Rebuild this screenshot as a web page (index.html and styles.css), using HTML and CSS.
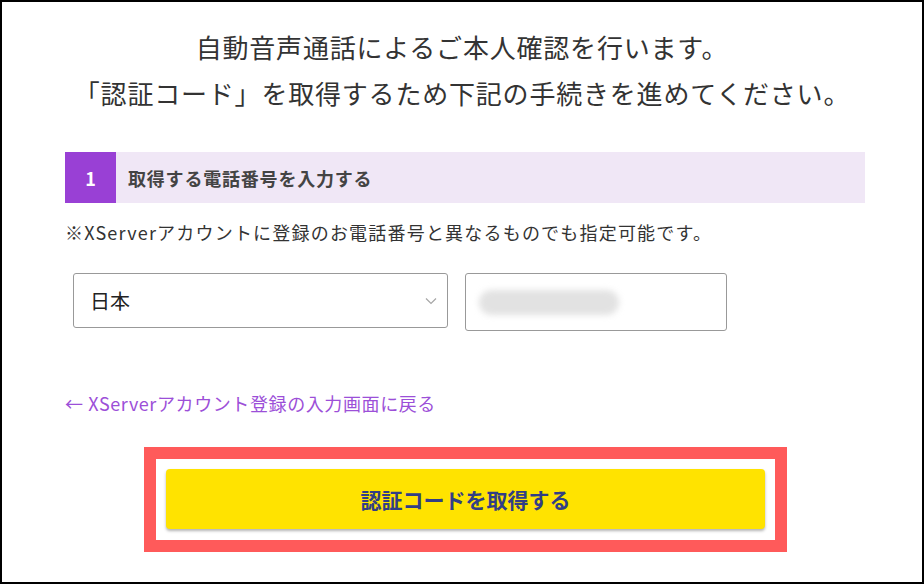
FILE: index.html
```html
<!DOCTYPE html>
<html lang="ja">
<head>
    <meta charset="UTF-8">
    <meta name="viewport" content="width=device-width, initial-scale=1.0">
    <title>認証コード取得</title>
    <link rel="stylesheet" href="styles.css">
</head>
<body>

    <div class="frame">
        <h1 class="lead">
            自動音声通話によるご本人確認を行います。<br>
            「認証コード」を取得するため下記の手続きを進めてください。
        </h1>

        <div class="content">
            <div class="step">
                <span class="step-num">1</span>
                <span class="step-title">取得する電話番号を入力する</span>
            </div>

            <p class="note">※XServerアカウントに登録のお電話番号と異なるものでも指定可能です。</p>

            <div class="fields">
                <div class="select">
                    <span>日本</span>
                    <svg class="chevron" width="12" height="8" viewBox="0 0 12 8">
                        <path d="M1 1.5 L6 6.5 L11 1.5" fill="none" stroke="#a6a6a6" stroke-width="1.2"/>
                    </svg>
                </div>
                <div class="phone">
                    <span class="masked"></span>
                </div>
            </div>

            <a class="back" href="#">← XServerアカウント登録の入力画面に戻る</a>

            <div class="highlight">
                <button class="submit">認証コードを取得する</button>
            </div>
        </div>
    </div>

</body>
</html>
```

FILE: styles.css
```css
body {
    margin: 0;
    background-color: #fff;
    font-family: "Noto Sans CJK JP", "Noto Sans", sans-serif;
    color: #333;
}
.frame {
    width: 924px;
    height: 584px;
    box-sizing: border-box;
    border: 2px solid #000;
    overflow: hidden;
}
.lead {
    margin: 22px 0 0;
    font-size: 26px;
    font-weight: normal;
    line-height: 46px;
    text-align: center;
    color: #333;
    letter-spacing: 0.8px;
}
.content {
    width: 800px;
    margin: 36px 0 0 63px;
}
.step {
    display: flex;
    align-items: center;
    height: 51px;
    background-color: #f0e7f6;
}
.step-num {
    display: flex;
    align-items: center;
    justify-content: center;
    width: 51px;
    height: 51px;
    background-color: #9940d5;
    color: #fff;
    font-weight: bold;
    font-size: 18px;
}
.step-title {
    margin-left: 12px;
    font-size: 18px;
    font-weight: bold;
    color: #444;
    letter-spacing: 0.8px;
}
.note {
    margin: 17px 0 0;
    font-size: 18px;
    line-height: 24px;
    color: #333;
    letter-spacing: 1.2px;
}
.fields {
    display: flex;
    align-items: flex-start;
    gap: 17px;
    margin: 29px 0 0 8px;
}
.select {
    display: flex;
    align-items: center;
    justify-content: space-between;
    width: 375px;
    height: 55px;
    box-sizing: border-box;
    padding: 0 10px 0 16px;
    border: 1px solid #999;
    border-radius: 3px;
    font-size: 20px;
    color: #222;
}
.phone {
    display: flex;
    align-items: center;
    width: 262px;
    height: 58px;
    box-sizing: border-box;
    padding-left: 13px;
    border: 1px solid #999;
    border-radius: 3px;
}
.masked {
    display: block;
    width: 140px;
    height: 25px;
    border-radius: 13px;
    background-color: #e2e2e2;
    filter: blur(3px);
}
.back {
    display: block;
    margin-top: 60px;
    font-size: 18px;
    line-height: 24px;
    color: #9c4fd8;
    text-decoration: none;
    letter-spacing: 0.6px;
}
.highlight {
    width: 643px;
    box-sizing: border-box;
    margin: 32px 0 0 79px;
    padding: 10px 10px 11px;
    border: 12px solid #ff5a5a;
}
.submit {
    display: block;
    width: 100%;
    height: 60px;
    border: none;
    border-radius: 4px;
    background-color: #ffe300;
    box-shadow: 0 2px 3px rgba(0, 0, 0, 0.3);
    font-family: "Noto Sans CJK JP", "Noto Sans", sans-serif;
    font-size: 21px;
    font-weight: bold;
    color: #323e85;
    cursor: pointer;
}
```
